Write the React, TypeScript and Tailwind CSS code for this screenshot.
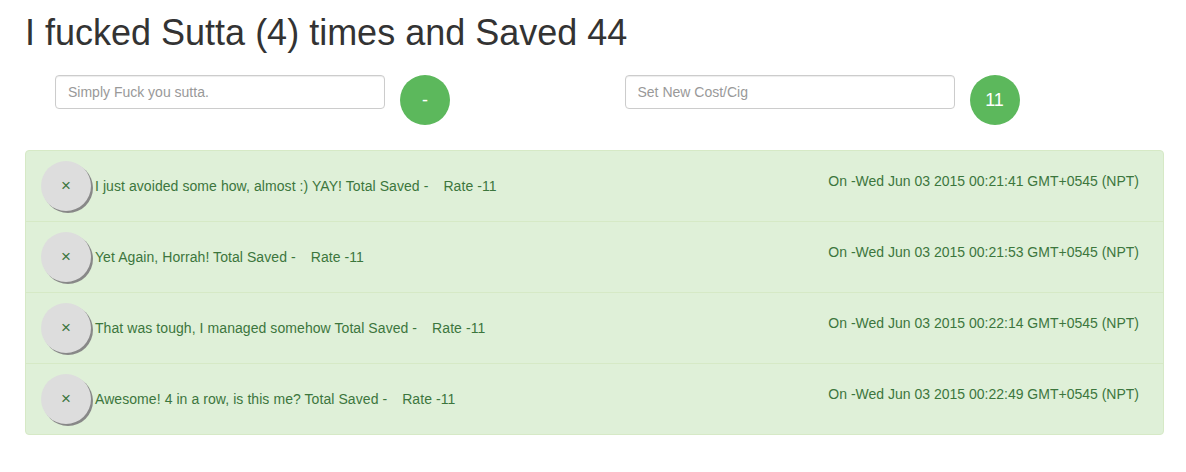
const entries = [
  { text: "I just avoided some how, almost :) YAY! Total Saved -", date: "Wed Jun 03 2015 00:21:41 GMT+0545 (NPT)" },
  { text: "Yet Again, Horrah! Total Saved -", date: "Wed Jun 03 2015 00:21:53 GMT+0545 (NPT)" },
  { text: "That was tough, I managed somehow Total Saved -", date: "Wed Jun 03 2015 00:22:14 GMT+0545 (NPT)" },
  { text: "Awesome! 4 in a row, is this me? Total Saved -", date: "Wed Jun 03 2015 00:22:49 GMT+0545 (NPT)" },
];

function InputGroup({ placeholder, label }: { placeholder: string; label: string }) {
  return (
    <div className="flex w-1/2 items-start pl-[30px]">
      <input
        type="text"
        placeholder={placeholder}
        className="h-[34px] w-[330px] rounded-[4px] border border-[#ccc] bg-white px-3 text-[14px] text-[#555] placeholder:text-[#999] shadow-[inset_0_1px_1px_rgba(0,0,0,0.075)] outline-none"
      />
      <button
        type="button"
        className="ml-[15px] flex h-[50px] w-[50px] items-center justify-center rounded-full bg-[#5cb85c] text-[18px] text-white"
      >
        {label}
      </button>
    </div>
  );
}

export default function App() {
  return (
    <div className="min-h-screen bg-white pl-[25px] pr-[22px] font-['Liberation_Sans',Arial,sans-serif] text-[14px] leading-[20px] text-[#333]">
      <h1 className="pt-[13px] text-[36px] leading-[40px] font-normal">
        I fucked Sutta (4) times and Saved 44
      </h1>

      <div className="mt-[22px] flex">
        <InputGroup placeholder="Simply Fuck you sutta." label="-" />
        <InputGroup placeholder="Set New Cost/Cig" label="11" />
      </div>

      <ul className="mt-[25px] rounded-[4px] border border-[#d6e9c6] bg-[#dff0d8] text-[#3c763d]">
        {entries.map((entry, i) => (
          <li
            key={i}
            className={`flex items-start justify-between py-[10px] pl-[15px] pr-[24px] ${i > 0 ? "border-t border-[#d6e9c6]" : ""}`}
          >
            <div className="flex items-center">
              <button
                type="button"
                className="flex h-[50px] w-[50px] items-center justify-center rounded-full bg-[#ddd] text-[17px] text-[#3c763d] shadow-[2px_2px_0.5px_#888]"
              >
                ×
              </button>
              <span className="ml-1 tracking-[0.07px]">
                {entry.text}
                <span className="ml-[15px]">Rate -11</span>
              </span>
            </div>
            <span className="mt-[10px]">On -{entry.date}</span>
          </li>
        ))}
      </ul>
    </div>
  );
}
